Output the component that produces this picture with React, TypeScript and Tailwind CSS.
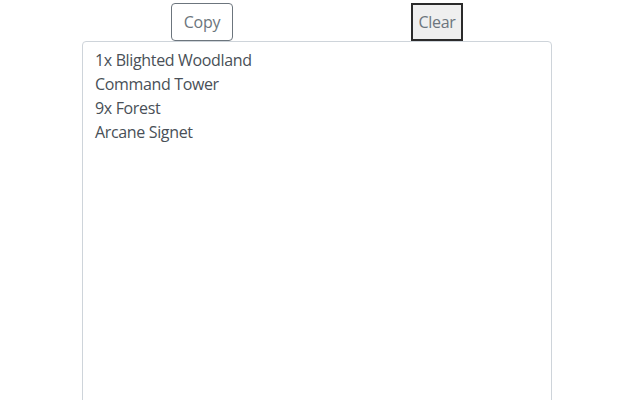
export default function App() {
    return (
        <div className="w-[640px] h-[400px] overflow-hidden bg-white" style={{fontFamily: '"Open Sans", sans-serif'}}>
            <div className="flex items-start pt-[3px] h-[41px]">
                <button className="ml-[171px] w-[62px] h-[38px] border border-[#6c757d] rounded-[4px] text-[16px] tracking-[-0.3px] text-[#6c757d] bg-white">
                    Copy
                </button>
                <button className="ml-[178px] w-[52px] h-[38px] border-2 border-[#2b2b2b] text-[16px] tracking-[-0.3px] text-[#6c757d] bg-[#efefef]">
                    Clear
                </button>
            </div>
            <textarea
                className="block ml-[82px] w-[470px] h-[400px] border border-[#ced4da] rounded-[4px] px-[12px] py-[6px] text-[16px] leading-[24px] tracking-[-0.35px] text-[#495057] resize-none outline-none"
                defaultValue={"1x Blighted Woodland\nCommand Tower\n9x Forest\nArcane Signet"}
            />
        </div>
    );
}
